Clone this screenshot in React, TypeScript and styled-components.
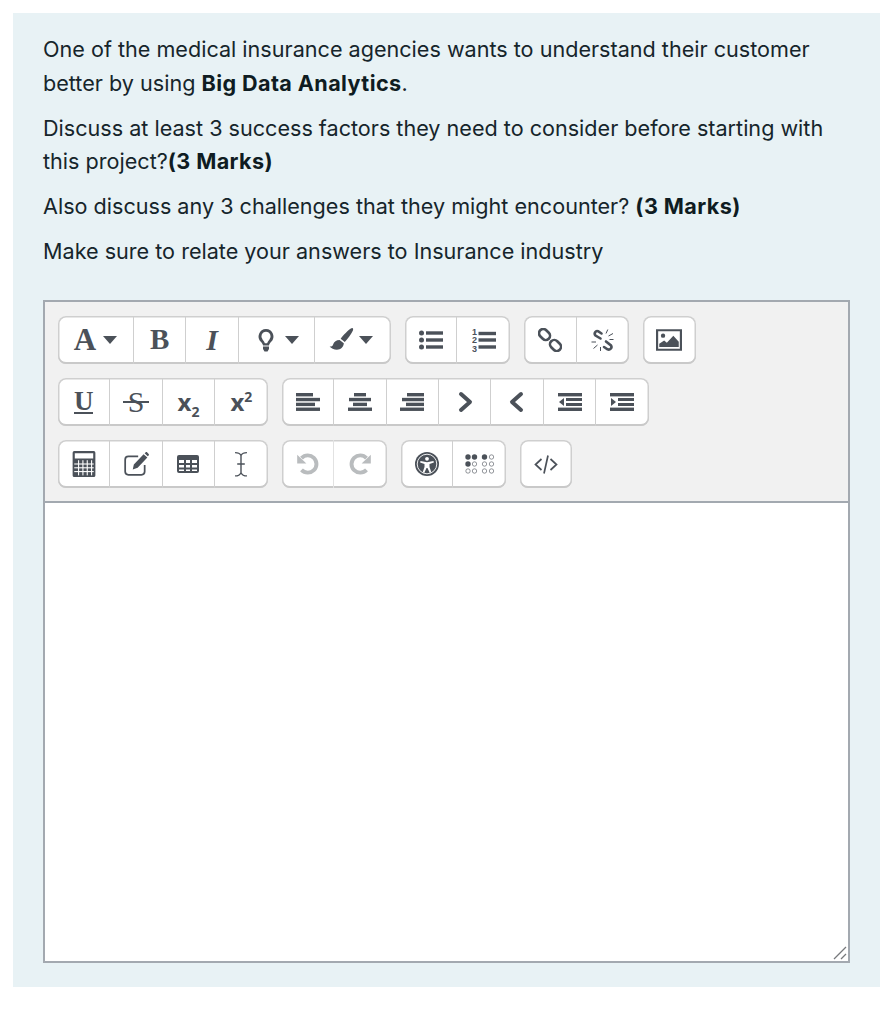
import styled, { createGlobalStyle } from 'styled-components';
import type { ReactNode } from 'react';

const GlobalStyle = createGlobalStyle`
  html, body {
    margin: 0;
    background: #ffffff;
  }
`;

const Page = styled.div`
  padding: 13px 10px 37px 13px;
`;

const Card = styled.div`
  box-sizing: border-box;
  width: 867px;
  height: 974px;
  padding: 20px 30px 24px;
  background: #e8f2f5;
  color: #16252b;
  font-family: Inter, 'Liberation Sans', sans-serif;
  font-size: 21.6px;
  line-height: 33.6px;
`;

const Paragraph = styled.p`
  margin: 0 0 11.4px;
  width: 800px;
`;

const Strong = styled.strong`
  font-weight: 700;
  letter-spacing: 0.4px;
  color: #0f1c22;
`;

const Editor = styled.div`
  box-sizing: border-box;
  width: 807px;
  height: 663px;
  margin-top: 31.2px;
  border: 2px solid #a3a9b0;
  display: flex;
  flex-direction: column;
  background: #ffffff;
`;

const Toolbar = styled.div`
  box-sizing: border-box;
  height: 201px;
  padding: 14px 13px;
  display: flex;
  flex-direction: column;
  gap: 14px;
  background: #f1f1f1;
  border-bottom: 2px solid #a3a9b0;
`;

const ToolbarRow = styled.div`
  display: flex;
  gap: 14.3px;
`;

const ButtonGroup = styled.div`
  display: flex;
  height: 48px;
  border-radius: 8px;
  background: #ffffff;
  box-shadow: inset 0 -2px 0 #c9c9c9, inset 0 0 0 1.5px #cfcfcf;
`;

const ToolButton = styled.div<{ $wide?: boolean; $faint?: boolean }>`
  box-sizing: border-box;
  width: ${(p) => (p.$wide ? '76px' : '52.4px')};
  flex: none;
  display: flex;
  align-items: center;
  justify-content: center;
  gap: 7px;
  color: ${(p) => (p.$faint ? '#b9bcbe' : '#4b5159')};
  border-right: 1.5px solid ${(p) => (p.$faint ? '#e2e2e2' : '#cfcfcf')};

  &:last-child {
    border-right: none;
  }
`;

const BrushButton = styled(ToolButton)`
  gap: 5px;
  padding-right: 4px;
`;

const Glyph = styled.span<{ $italic?: boolean; $size?: number; $under?: boolean }>`
  font-family: 'Liberation Serif', serif;
  font-weight: 700;
  font-style: ${(p) => (p.$italic ? 'italic' : 'normal')};
  font-size: ${(p) => p.$size ?? 29}px;
  line-height: 1;
  ${(p) => (p.$under ? 'border-bottom: 2px solid #4b5159; line-height: 22px; height: 22px;' : '')}
`;

const Strike = styled.span`
  position: relative;
  font-family: 'Liberation Serif', serif;
  font-size: 30px;
  line-height: 1;

  &::after {
    content: '';
    position: absolute;
    left: -5px;
    right: -5px;
    top: 14px;
    height: 2px;
    background: #4b5159;
  }
`;

const Script = styled.span`
  font-family: 'Open Sans', 'Liberation Sans', sans-serif;
  font-weight: 700;
  font-size: 24px;
  line-height: 1;

  sub,
  sup {
    font-size: 14px;
    line-height: 0;
  }
`;

const ListDigit = styled.text`
  font-family: 'Liberation Sans', sans-serif;
  font-size: 9px;
  font-weight: 700;
`;

const TextArea = styled.div`
  flex: 1;
  position: relative;
`;

const ResizeHandle = styled.svg`
  position: absolute;
  right: 0;
  bottom: 0;
`;

const Caret = () => (
  <svg width="14" height="8" viewBox="0 0 14 8">
    <path d="M0 0h14L7 8z" fill="currentColor" />
  </svg>
);

const Icon = ({ children, size = 24 }: { children: ReactNode; size?: number }) => (
  <svg width={size} height={size} viewBox="0 0 24 24" fill="currentColor">
    {children}
  </svg>
);

const Bars = ({ rows }: { rows: [number, number][] }) => (
  <Icon>
    {rows.map(([x, w], i) => (
      <rect key={i} x={x} y={3 + i * 4.85} width={w} height={3.4} />
    ))}
  </Icon>
);

const IndentBars = ({ arrow }: { arrow: string }) => (
  <Icon>
    <rect x="0" y="3" width="24" height="3.4" />
    <rect x="8" y="8" width="16" height="3" />
    <rect x="8" y="13" width="16" height="3" />
    <rect x="0" y="17.6" width="24" height="3.4" />
    <path d={arrow} />
  </Icon>
);

const BRAILLE_X = [4, 10.5, 20.5, 27.5];
const BRAILLE_Y = [4, 11, 18];
const BRAILLE_FILLED = ['0-0', '1-0', '2-0', '0-1'];

const App = () => (
  <>
    <GlobalStyle />
    <Page>
      <Card>
        <Paragraph>
          One of the medical insurance agencies wants to understand their customer better by using{' '}
          <Strong>Big Data Analytics</Strong>.
        </Paragraph>
        <Paragraph>
          Discuss at least 3 success factors they need to consider before starting with this project?
          <Strong>(3 Marks)</Strong>
        </Paragraph>
        <Paragraph>
          Also discuss any 3 challenges that they might encounter? <Strong>(3 Marks)</Strong>
        </Paragraph>
        <Paragraph>Make sure to relate your answers to Insurance industry</Paragraph>
        <Editor>
          <Toolbar>
            <ToolbarRow>
              <ButtonGroup>
                <ToolButton $wide>
                  <Glyph $size={31}>A</Glyph>
                  <Caret />
                </ToolButton>
                <ToolButton>
                  <Glyph>B</Glyph>
                </ToolButton>
                <ToolButton>
                  <Glyph $italic $size={30}>I</Glyph>
                </ToolButton>
                <ToolButton $wide>
                  <Icon>
                    <path
                      fillRule="evenodd"
                      d="M12 1a7.5 7.5 0 0 0-5 13c1 1 1.8 2.2 2 3.5h6c.2-1.3 1-2.5 2-3.500a7.5 7.5 0 0 0-5-13zm0 2.800a4.700 4.700 0 0 1 3.300 8c-1 1-1.800 2.200-2.200 3.500h-2.200c-.4-1.300-1.200-2.500-2.200-3.500A4.700 4.700 0 0 1 12 3.800z"
                    />
                    <path d="M9 18.500h6V21l-1.500 2.500h-3L9 21z" />
                  </Icon>
                  <Caret />
                </ToolButton>
                <BrushButton $wide>
                  <Icon size={26}>
                    <path d="M22.500 1c.9.500.9 1.400.4 2.400-1.800 3.400-4.800 7.600-7.400 10.500l-3.800-3c2.500-3.500 6.800-7.800 9.400-9.500.6-.4 1.100-.6 1.400-.4z" />
                    <path d="M10.700 12l3.900 3.100c-.3 3.600-3 5.900-6.400 5.900-2.800 0-5.200-1-6.700-2.900 2 .1 2.900-.7 3.400-2.400.6-2.100 2.800-3.700 5.800-3.700z" />
                  </Icon>
                  <Caret />
                </BrushButton>
              </ButtonGroup>
              <ButtonGroup>
                <ToolButton>
                  <Icon>
                    <circle cx="2.5" cy="5" r="2.5" />
                    <circle cx="2.5" cy="12" r="2.5" />
                    <circle cx="2.5" cy="19" r="2.5" />
                    <rect x="7" y="3.3" width="17" height="3.4" />
                    <rect x="7" y="10.3" width="17" height="3.4" />
                    <rect x="7" y="17.3" width="17" height="3.4" />
                  </Icon>
                </ToolButton>
                <ToolButton>
                  <Icon>
                    <ListDigit x="0" y="7">1</ListDigit>
                    <ListDigit x="0" y="15">2</ListDigit>
                    <ListDigit x="0" y="23.5">3</ListDigit>
                    <rect x="6.5" y="3.8" width="17.5" height="3.4" />
                    <rect x="6.5" y="10.3" width="17.5" height="3.4" />
                    <rect x="6.5" y="17.3" width="17.5" height="3.4" />
                  </Icon>
                </ToolButton>
              </ButtonGroup>
              <ButtonGroup>
                <ToolButton>
                  <Icon>
                    <g fill="none" stroke="currentColor" strokeWidth="2.600">
                      <rect x="0.500" y="2.250" width="12" height="8.500" rx="4.200" transform="rotate(45 6.500 6.500)" />
                      <rect x="11.500" y="13.250" width="12" height="8.500" rx="4.200" transform="rotate(45 17.500 17.500)" />
                    </g>
                  </Icon>
                </ToolButton>
                <ToolButton>
                  <Icon>
                    <g fill="none" stroke="currentColor" strokeWidth="2.600" strokeLinecap="round">
                      <path d="M9.500 10.500 4.500 7.500C2.500 5.500 4.800 2.200 7 3.200l3.500 2.300" />
                      <path d="M13 19l3.500 2.300c2.500 1 5-1.500 3.500-3.800L15 13.500" />
                    </g>
                    <g fill="none" stroke="currentColor" strokeWidth="1">
                      <path d="M15 5.500l1.800-4M17.500 8l4.500-2.500M18.500 11.500h4M5 14H.5M6.500 17l-4 3.500M9.500 19v4" />
                    </g>
                  </Icon>
                </ToolButton>
              </ButtonGroup>
              <ButtonGroup>
                <ToolButton>
                  <Icon size={26}>
                    <path fillRule="evenodd" d="M0 2h24v20H0zM2 4v16h20V4z" />
                    <circle cx="6.5" cy="8" r="2" />
                    <path d="M3 18.500v-3l4.500-3 2.500 2L16 8l5 5.500v5z" />
                  </Icon>
                </ToolButton>
              </ButtonGroup>
            </ToolbarRow>
            <ToolbarRow>
              <ButtonGroup>
                <ToolButton>
                  <Glyph $under $size={27}>U</Glyph>
                </ToolButton>
                <ToolButton>
                  <Strike>S</Strike>
                </ToolButton>
                <ToolButton>
                  <Script>
                    x<sub>2</sub>
                  </Script>
                </ToolButton>
                <ToolButton>
                  <Script>
                    x<sup>2</sup>
                  </Script>
                </ToolButton>
              </ButtonGroup>
              <ButtonGroup>
                <ToolButton>
                  <Bars rows={[[0, 17], [0, 24], [0, 19], [0, 24]]} />
                </ToolButton>
                <ToolButton>
                  <Bars rows={[[6, 12], [1, 22], [5, 14], [0, 24]]} />
                </ToolButton>
                <ToolButton>
                  <Bars rows={[[7, 17], [2, 22], [6, 18], [0, 24]]} />
                </ToolButton>
                <ToolButton>
                  <Icon>
                    <path d="M8 4l9 8-9 8" fill="none" stroke="currentColor" strokeWidth="4" strokeLinecap="round" strokeLinejoin="round" />
                  </Icon>
                </ToolButton>
                <ToolButton>
                  <Icon>
                    <path d="M16 4l-9 8 9 8" fill="none" stroke="currentColor" strokeWidth="4" strokeLinecap="round" strokeLinejoin="round" />
                  </Icon>
                </ToolButton>
                <ToolButton>
                  <IndentBars arrow="M6 8v8L1 12z" />
                </ToolButton>
                <ToolButton>
                  <IndentBars arrow="M1 8v8l5-4z" />
                </ToolButton>
              </ButtonGroup>
            </ToolbarRow>
            <ToolbarRow>
              <ButtonGroup>
                <ToolButton>
                  <Icon size={26}>
                    <path
                      fillRule="evenodd"
                      d="M3 0h18a1.5 1.5 0 0 1 1.5 1.500v21A1.5 1.5 0 0 1 21 24H3a1.5 1.5 0 0 1-1.5-1.500v-21A1.5 1.5 0 0 1 3 0zm.5 2v5h17V2z"
                    />
                    <g fill="#ffffff">
                      {[6.5, 10.5, 14.5, 18.5].map((x) => (
                        <rect key={x} x={x} y="8.5" width="1" height="14" />
                      ))}
                      <rect x="3" y="11.5" width="18" height="1" />
                      <rect x="3" y="15" width="18" height="1" />
                      <rect x="3" y="18.5" width="18" height="1" />
                    </g>
                  </Icon>
                </ToolButton>
                <ToolButton>
                  <Icon size={26}>
                    <path d="M14 5H5a3 3 0 0 0-3 3v11a3 3 0 0 0 3 3h12a3 3 0 0 0 3-3v-6" fill="none" stroke="currentColor" strokeWidth="1.6" />
                    <path d="M19 3l3.500 3-9 9.500-4.500 1.500 1-4.500zM20 2l1-.8c.5-.3 1-.2 1.400.2l1.300 1.300c.4.500.4 1-.1 1.400l-.8.800z" />
                  </Icon>
                </ToolButton>
                <ToolButton>
                  <Icon>
                    <path
                      fillRule="evenodd"
                      d="M3 3h18a2 2 0 0 1 2 2v14a2 2 0 0 1-2 2H3a2 2 0 0 1-2-2V5a2 2 0 0 1 2-2zm0 5v3h5V8zm7 0v3h4V8zm6 0v3h5V8zM3 13v2.500h5V13zm7 0v2.500h4V13zm6 0v2.500h5V13zM3 17.500V19h5v-1.500zm7 0V19h4v-1.500zm6 0V19h5v-1.500z"
                    />
                  </Icon>
                </ToolButton>
                <ToolButton>
                  <Icon size={26}>
                    <path
                      d="M6.500 1.500c2.500 0 4.500.8 5.500 2.500 1-1.700 3-2.500 5.500-2.500M12 4v16M8.500 12h7M6.500 23c2.500 0 4.500-.8 5.500-3 1 2.200 3 3 5.500 3"
                      fill="none"
                      stroke="currentColor"
                      strokeWidth="1.3"
                    />
                  </Icon>
                </ToolButton>
              </ButtonGroup>
              <ButtonGroup>
                <ToolButton $faint>
                  <Icon size={26}>
                    <path d="M6 6.500A8 8 0 1 1 6 17.500" fill="none" stroke="currentColor" strokeWidth="3.6" />
                    <path d="M2 3.500l8.500 8H2z" />
                  </Icon>
                </ToolButton>
                <ToolButton $faint>
                  <Icon size={26}>
                    <path d="M18 6.500A8 8 0 1 0 18 17.500" fill="none" stroke="currentColor" strokeWidth="3.6" />
                    <path d="M22 3.500l-8.500 8H22z" />
                  </Icon>
                </ToolButton>
              </ButtonGroup>
              <ButtonGroup>
                <ToolButton>
                  <Icon>
                    <circle cx="12" cy="12" r="12" />
                    <circle cx="12" cy="12" r="9.8" fill="none" stroke="#ffffff" strokeWidth="0.9" />
                    <g fill="#ffffff">
                      <circle cx="12" cy="6.8" r="1.9" />
                      <path d="M5.500 9l6.500 1.200L18.500 9l.4 1.500-4.400 1.500v3l1.800 5.300-1.500.6-2.300-5h-1l-2.300 5-1.500-.6L9.500 15v-3l-4.400-1.500z" />
                    </g>
                  </Icon>
                </ToolButton>
                <ToolButton>
                  <svg width="32" height="22" viewBox="0 0 32 22" fill="currentColor">
                    {BRAILLE_Y.map((y, r) =>
                      BRAILLE_X.map((x, c) => {
                        const filled = BRAILLE_FILLED.includes(`${c}-${r}`);
                        return (
                          <circle
                            key={`${r}-${c}`}
                            cx={x}
                            cy={y}
                            r={filled ? 2.7 : 2.2}
                            fill={filled ? 'currentColor' : 'none'}
                            stroke="currentColor"
                            strokeWidth={filled ? 0 : 0.6}
                          />
                        );
                      }),
                    )}
                  </svg>
                </ToolButton>
              </ButtonGroup>
              <ButtonGroup>
                <ToolButton>
                  <Icon>
                    <path
                      d="M7.500 7L1.500 12.500l6 5.500M16.500 7l6 5.500-6 5.500M14 3.500l-4 18"
                      fill="none"
                      stroke="currentColor"
                      strokeWidth="1.7"
                    />
                  </Icon>
                </ToolButton>
              </ButtonGroup>
            </ToolbarRow>
          </Toolbar>
          <TextArea>
            <ResizeHandle width="16" height="16" viewBox="0 0 16 16">
              <path d="M2 14 14 2M9 14l5-5" stroke="#77797c" strokeWidth="1.3" fill="none" />
            </ResizeHandle>
          </TextArea>
        </Editor>
      </Card>
    </Page>
  </>
);

export default App;
